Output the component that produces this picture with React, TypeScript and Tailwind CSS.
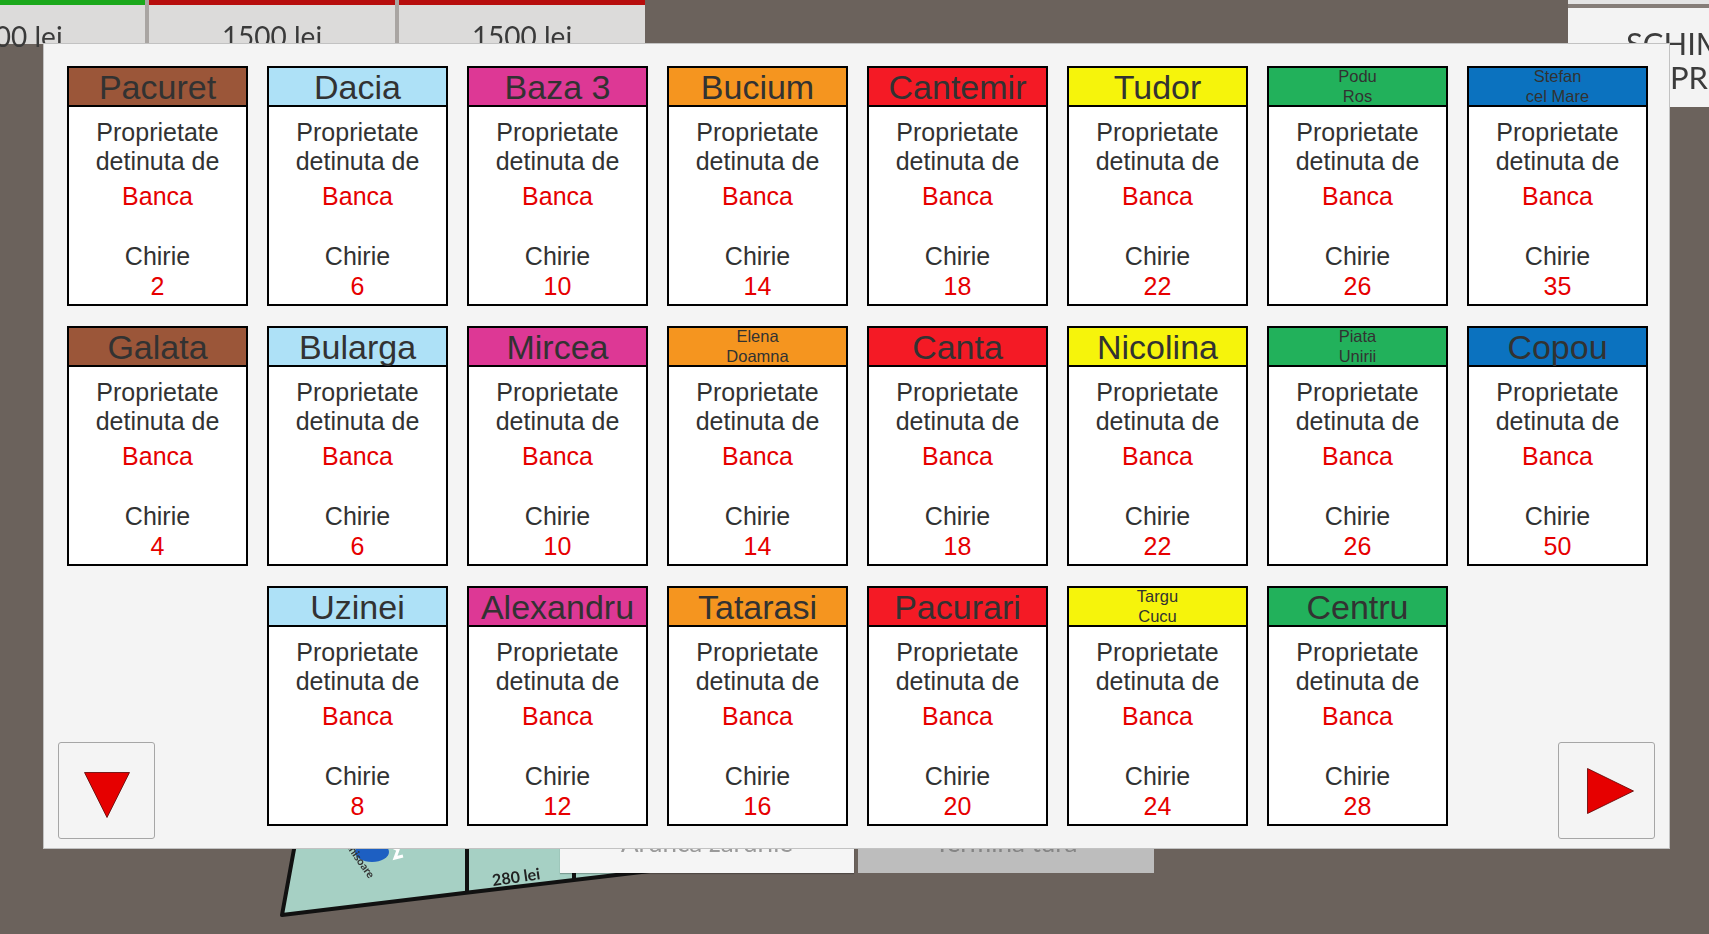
import React from "react";

type Prop = { name: string[]; color: string; rent: number };

const brown = "bg-[#9b5639]";
const sky = "bg-[#aee1f7]";
const pink = "bg-[#dd3895]";
const orange = "bg-[#f5951f]";
const red = "bg-[#f41a25]";
const yellow = "bg-[#f6f40b]";
const green = "bg-[#22b15b]";
const blue = "bg-[#0b72bf]";

const rowOne: Prop[] = [
    { name: ["Pacuret"], color: brown, rent: 2 },
    { name: ["Dacia"], color: sky, rent: 6 },
    { name: ["Baza 3"], color: pink, rent: 10 },
    { name: ["Bucium"], color: orange, rent: 14 },
    { name: ["Cantemir"], color: red, rent: 18 },
    { name: ["Tudor"], color: yellow, rent: 22 },
    { name: ["Podu", "Ros"], color: green, rent: 26 },
    { name: ["Stefan", "cel Mare"], color: blue, rent: 35 },
];

const rowTwo: Prop[] = [
    { name: ["Galata"], color: brown, rent: 4 },
    { name: ["Bularga"], color: sky, rent: 6 },
    { name: ["Mircea"], color: pink, rent: 10 },
    { name: ["Elena", "Doamna"], color: orange, rent: 14 },
    { name: ["Canta"], color: red, rent: 18 },
    { name: ["Nicolina"], color: yellow, rent: 22 },
    { name: ["Piata", "Unirii"], color: green, rent: 26 },
    { name: ["Copou"], color: blue, rent: 50 },
];

const rowThree: Prop[] = [
    { name: ["Uzinei"], color: sky, rent: 8 },
    { name: ["Alexandru"], color: pink, rent: 12 },
    { name: ["Tatarasi"], color: orange, rent: 16 },
    { name: ["Pacurari"], color: red, rent: 20 },
    { name: ["Targu", "Cucu"], color: yellow, rent: 24 },
    { name: ["Centru"], color: green, rent: 28 },
];

function Card({ p }: { p: Prop }) {
    return (
        <div className="flex h-[240px] w-[181px] flex-col border-2 border-black bg-white text-center text-[#323232]">
            <div className={`flex h-[39px] shrink-0 flex-col items-center justify-center border-b-2 border-black ${p.color}`}>
                {p.name.length === 1 ? (
                    <span className="whitespace-nowrap pt-[1px] text-[34px] leading-[37px]">{p.name[0]}</span>
                ) : (
                    p.name.map((n) => (
                        <span key={n} className="whitespace-nowrap text-[16.5px] leading-[19.5px]">{n}</span>
                    ))
                )}
            </div>
            <div className="flex flex-col items-center pt-[11px] text-[25px] leading-[28.6px]">
                <p>Proprietate</p>
                <p>detinuta de</p>
                <p className="mt-[6.5px] text-[#e60000]">Banca</p>
                <p className="mt-[31.4px]">Chirie</p>
                <p className="mt-[2px] text-[#e60000]">{p.rent}</p>
            </div>
        </div>
    );
}

function TopCell({ bar, wide }: { bar: string; wide?: boolean }) {
    return (
        <div className={wide ? "w-[265px]" : "w-[246px]"}>
            <div className={`h-[5px] ${bar}`} />
            <div className="h-[39px] bg-[#dcdbda] pt-[16px] text-center font-['Lato',sans-serif] text-[28px] leading-[30px] text-[#3a3a3a]">
                1500 lei
            </div>
        </div>
    );
}

function Background() {
    return (
        <div className="blur-[0.7px]">
            {/* player money strip */}
            <div className="absolute left-[-120px] top-0 flex gap-[4px] bg-[#a9a5a2]">
                <TopCell bar="bg-[#1ba81b]" wide />
                <TopCell bar="bg-[#b70d0d]" />
                <TopCell bar="bg-[#b70d0d]" />
            </div>

            {/* trade button top right */}
            <div className="absolute left-[1568px] top-0 w-[160px]">
                <div className="h-[4px] bg-[#e4e4e4]" />
                <div className="h-[4px] bg-[#857d78]" />
                <div className="h-[99px] bg-[#f3f3f3] pt-[18px] font-['Lato',sans-serif] text-[31px] leading-[34px] text-[#3c3c3c]">
                    <p className="pl-[58px]">SCHIMBA</p>
                    <p className="pl-[102px]">PRIMIRE</p>
                </div>
            </div>

            {/* board corner */}
            <svg className="absolute left-[270px] top-[800px]" width="400" height="134" viewBox="0 0 400 134">
                <polygon points="33,0 12,115 194,93 380,71 380,0" fill="#a6d0c4" stroke="#111" strokeWidth="4" strokeLinejoin="round" />
                <line x1="197" y1="0" x2="197" y2="93" stroke="#111" strokeWidth="4" />
                <line x1="304" y1="0" x2="304" y2="81" stroke="#111" strokeWidth="4" />
                <ellipse cx="102" cy="52" rx="17" ry="10" fill="#1d5fc2" />
                <path d="M120 46 l8 4 l-3 8 l8 -2" stroke="#fff" strokeWidth="3" fill="none" />
                <text x="0" y="0" fontSize="11" fontWeight="700" fill="#333" fontFamily="Lato, sans-serif" transform="translate(70 38) rotate(55)">
                    Inchisoare
                </text>
                <text x="0" y="0" fontSize="16" fontWeight="700" fill="#222" fontFamily="Lato, sans-serif" transform="translate(223 86) rotate(-8)">
                    280 lei
                </text>
            </svg>

            {/* action buttons under the dialog */}
            <div className="absolute left-[560px] top-[800px] flex gap-[4px]">
                <div className="flex h-[73px] w-[294px] items-end justify-center bg-[#f5f5f5] pb-[16px] font-['Lato',sans-serif] text-[26px] leading-[30px] text-[#9a9a9a] shadow-[0_1px_1px_rgba(0,0,0,0.25)]">
                    Arunca zarurile
                </div>
                <div className="flex h-[73px] w-[296px] items-end justify-center bg-[#bdbdbd] pb-[16px] font-['Lato',sans-serif] text-[26px] leading-[30px] text-[#858585]">
                    Termina tura
                </div>
            </div>
        </div>
    );
}

function NavButton({ dir }: { dir: "down" | "right" }) {
    return (
        <button
            className={`flex h-[97px] w-[97px] items-start rounded-[3px] border border-[#a6a6a6] bg-[#f4f4f4] ${
                dir === "down" ? "-mb-[13px] -ml-[9px] pl-[25px] pt-[29px]" : "-mb-[13px] -mr-[7px] pl-[28px] pt-[25px]"
            }`}
        >
            {dir === "down" ? (
                <svg width="46" height="46" viewBox="0 0 46 46">
                    <polygon points="0.5,0.5 45.5,0.5 23,45.5" fill="#e60000" stroke="#5a0000" strokeWidth="0.8" />
                </svg>
            ) : (
                <svg width="47" height="46" viewBox="0 0 47 46">
                    <polygon points="0.5,0.5 46.5,23 0.5,45.5" fill="#e60000" stroke="#5a0000" strokeWidth="0.8" />
                </svg>
            )}
        </button>
    );
}

export default function App() {
    return (
        <div className="relative h-[934px] w-[1709px] overflow-hidden bg-[#6b625c] font-['Liberation_Sans',Arial,sans-serif]">
            <Background />

            <div className="absolute left-[43px] top-[43px] h-[806px] w-[1627px] border border-[#c2c2c2] bg-[#f4f4f4] pl-[23px] pt-[22px]">
                <div className="grid grid-cols-[repeat(8,181px)] grid-rows-[repeat(3,240px)] gap-x-[19px] gap-y-[20px]">
                    {rowOne.map((p) => (
                        <Card key={p.name.join(" ")} p={p} />
                    ))}
                    {rowTwo.map((p) => (
                        <Card key={p.name.join(" ")} p={p} />
                    ))}
                    <div className="flex flex-col items-start justify-end">
                        <NavButton dir="down" />
                    </div>
                    {rowThree.map((p) => (
                        <Card key={p.name.join(" ")} p={p} />
                    ))}
                    <div className="flex flex-col items-end justify-end">
                        <NavButton dir="right" />
                    </div>
                </div>
            </div>
        </div>
    );
}
